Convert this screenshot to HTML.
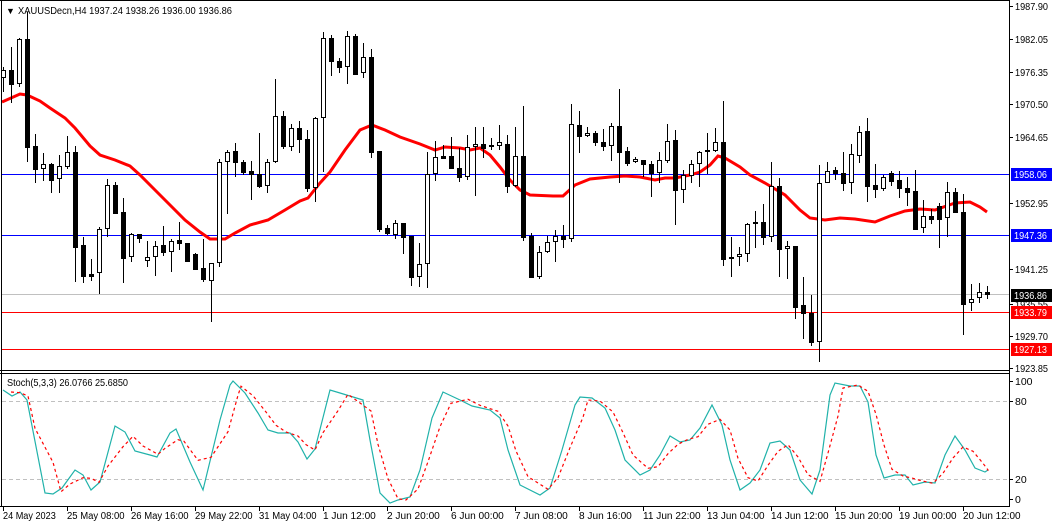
<!DOCTYPE html>
<html><head><meta charset="utf-8"><style>
html,body{margin:0;padding:0;background:#fff;width:1054px;height:527px;overflow:hidden}
svg{display:block;font-family:"Liberation Sans",sans-serif}
</style></head><body>
<svg id="s" width="1054" height="527" viewBox="0 0 1054 527" xmlns="http://www.w3.org/2000/svg" shape-rendering="crispEdges">
<rect width="1054" height="527" fill="#fff"/>
<g id="lv"></g>
<g id="c"></g>
<g id="st"></g>
<line x1="1.5" y1="0" x2="1.5" y2="507" stroke="#000"/>
<line x1="1009.5" y1="0" x2="1009.5" y2="507" stroke="#000"/>
<line x1="0" y1="0.5" x2="1010" y2="0.5" stroke="#000"/>
<line x1="0" y1="370.5" x2="1010" y2="370.5" stroke="#000"/>
<line x1="0" y1="373.5" x2="1010" y2="373.5" stroke="#000"/>
<line x1="0" y1="506.5" x2="1010" y2="506.5" stroke="#000"/>
<text x="6" y="14" font-size="9">&#9660;</text>
<text x="18" y="14" font-size="10.5" fill="#000" textLength="214" lengthAdjust="spacingAndGlyphs">XAUUSDecn,H4  1937.24 1938.26 1936.00 1936.86</text>
<text x="7" y="386" font-size="10.5" textLength="121" lengthAdjust="spacingAndGlyphs">Stoch(5,3,3) 26.0766 25.6850</text>
<g id="ax" font-size="10.5"></g>
</svg>
<script>
const NS="http://www.w3.org/2000/svg";
function el(p,t,a,txt){const e=document.createElementNS(NS,t);for(const k in a)e.setAttribute(k,a[k]);if(txt!=null)e.textContent=txt;p.appendChild(e);return e;}
const lv=document.getElementById('lv'),cg=document.getElementById('c'),sg=document.getElementById('st'),ax=document.getElementById('ax');
[[174,'#0000ff'],[235,'#0000ff'],[294,'#c0c0c0'],[312,'#ff0000'],[349,'#ff0000']].forEach(l=>el(lv,'line',{x1:2,x2:1009,y1:l[0]+.5,y2:l[0]+.5,stroke:l[1]}));
const C=[[3,67,92,70,78,1],[11,47,103,70,84,0],[19,38,87,39,84,1],[27,12,162,39,147,0],[35,134,183,146,169,0],[43,153,181,164,169,1],[51,163,193,164,180,0],[59,155,193,166,179,1],[67,136,169,152,167,1],[75,146,282,152,247,0],[83,237,283,245,276,0],[91,259,281,274,276,0],[99,227,294,229,273,1],[107,179,237,185,229,1],[115,182,214,185,213,0],[123,198,283,212,258,0],[131,233,262,234,257,1],[139,234,243,234,238,0],[147,241,267,257,261,1],[155,241,276,246,257,1],[163,226,256,245,252,0],[171,239,272,241,252,1],[179,222,250,240,243,0],[187,243,262,243,261,0],[195,253,270,254,269,0],[203,239,282,268,279,0],[211,263,322,263,281,1],[219,159,267,162,263,1],[227,150,214,152,162,1],[235,143,177,151,162,0],[243,160,175,162,172,0],
[251,161,200,171,174,0],[259,133,188,174,186,0],[267,159,193,162,186,1],[275,79,163,116,162,1],[283,111,149,116,146,0],[291,124,151,128,147,1],[299,121,153,128,139,0],[307,130,192,139,188,0],[315,117,202,118,188,1],[323,32,172,38,118,1],[331,35,76,38,61,0],[339,58,73,61,67,0],[347,31,84,36,67,1],[355,34,75,36,74,0],[363,43,78,57,73,1],[371,49,158,57,152,0],[379,151,232,151,229,0],[387,225,235,228,233,0],[395,220,239,223,235,1],[403,223,254,223,237,0],[411,236,286,236,277,0],[419,243,287,264,277,1],[427,152,288,174,264,1],[435,141,181,157,174,1],[443,145,159,156,158,0],[451,137,169,156,168,0],[459,148,182,168,177,0],[467,135,180,147,177,1],[475,127,196,144,147,1],[483,127,158,144,148,0],[491,138,150,145,147,1],[499,125,150,142,146,1],
[507,135,193,144,186,0],[515,127,187,156,186,1],[523,106,241,156,237,0],[531,233,277,236,277,0],[539,246,279,252,277,1],[547,236,253,242,252,1],[555,230,262,236,242,1],[563,225,248,236,239,0],[571,104,242,124,239,1],[579,111,153,125,136,0],[587,127,137,133,136,1],[595,131,146,133,142,0],[603,129,151,142,146,0],[611,123,161,126,146,1],[619,89,183,126,152,0],[627,147,166,151,163,0],[635,157,163,159,162,1],[643,160,177,160,164,0],[651,161,197,164,173,0],[659,152,183,160,173,1],[667,124,163,141,161,1],[675,130,225,140,190,0],[683,170,203,175,190,1],[691,160,183,164,176,1],[699,151,187,152,164,1],[707,133,174,150,152,1],[715,128,152,142,151,1],[723,101,266,142,259,0],[731,237,277,257,259,1],[739,247,266,254,257,1],[747,223,262,224,254,1],
[755,211,248,222,224,1],[763,204,245,222,237,0],[771,162,242,186,237,1],[779,178,277,186,249,0],[787,241,279,246,249,1],[795,246,319,246,307,0],[803,277,339,305,313,0],[811,295,346,313,342,0],[819,165,362,183,342,1],[827,162,183,171,183,1],[835,167,180,170,173,0],[843,152,191,173,183,0],[851,144,194,154,183,1],[859,126,163,132,156,1],[867,118,202,131,186,0],[875,164,198,185,189,0],[883,175,191,177,189,1],[891,171,186,173,181,0],[899,171,198,180,188,0],[907,177,206,188,192,0],[915,170,230,191,229,0],[923,200,233,216,228,1],[931,209,224,216,219,0],[939,203,248,206,219,0],[947,182,237,192,218,1],[955,188,213,192,212,0],[963,194,335,212,304,0],[971,284,311,299,303,1],[979,283,303,292,298,1],[987,286,299,292,294,0]];
const MA=[[2,102],[20,94],[27,95],[40,101],[50,108],[65,118],[75,128],[90,146],[100,155],[115,160],[130,166],[140,175],[155,190],[170,205],[185,220],[200,232],[210,239],[225,239],[235,233],[250,225],[268,220],[285,210],[300,201],[308,198],[320,183],[330,172],[345,150],[360,130],[372,125],[385,130],[400,137],[420,144],[435,150],[445,147],[460,148],[470,150],[480,148],[490,155],[500,167],[510,180],[520,190],[530,195],[553,196],[563,196],[575,185],[590,179],[610,177],[625,176],[640,177],[655,180],[665,178],[675,178],[690,175],[700,172],[710,165],[718,156],[725,158],[740,167],[750,175],[765,183],[785,195],[800,210],[810,218],[825,220],[840,218],[855,219],[875,222],[890,216],[905,211],[920,209],[935,210],[955,203],[970,202],[980,207],[987,212]];
el(cg,'polyline',{points:MA.map(p=>p.join(',')).join(' '),fill:'none',stroke:'#ff0000','stroke-width':3,'shape-rendering':'auto'});
C.forEach(c=>{const x=c[0]+.5;
el(cg,'line',{x1:x,x2:x,y1:c[1],y2:c[2],stroke:'#000'});
const h=Math.max(c[4]-c[3],1);
if(c[5]) el(cg,'rect',{x:c[0]-2+.5,y:c[3]+.5,width:4,height:Math.max(h-1,1),fill:'#fff',stroke:'#000'});
else el(cg,'rect',{x:c[0]-2,y:c[3],width:5,height:h+1,fill:'#000'});
});
[401,479].forEach(y=>el(sg,'line',{x1:2,x2:1009,y1:y+.5,y2:y+.5,stroke:'#c0c0c0','stroke-dasharray':'4,3'}));
const T=[[3,390],[12,396],[20,392],[27,400],[45,493],[53,494],[62,488],[75,470],[83,475],[91,490],[100,482],[115,426],[125,432],[135,451],[150,455],[157,457],[170,433],[176,429],[190,462],[203,490],[220,420],[230,385],[233,381],[245,393],[258,413],[268,430],[278,433],[290,433],[298,442],[307,459],[315,449],[330,390],[340,393],[363,400],[370,440],[380,493],[390,503],[398,500],[410,497],[420,470],[432,418],[443,392],[460,400],[472,406],[490,410],[500,418],[508,450],[520,485],[540,495],[550,488],[562,450],[575,405],[580,397],[592,398],[605,408],[615,430],[625,460],[640,475],[650,470],[660,455],[670,436],[680,442],[690,440],[700,428],[712,405],[722,425],[730,460],[740,490],[750,483],[760,470],[770,443],[780,441],[790,450],[800,480],[812,494],[820,470],[830,395],[835,383],[850,386],[860,386],[868,402],[876,455],[884,478],[895,475],[905,475],[913,485],[925,482],[935,483],[945,455],[955,436],[965,450],[975,468],[985,472],[988,470]];
el(sg,'polyline',{points:T.map(p=>p.join(',')).join(' '),fill:'none',stroke:'#20b2aa','stroke-width':1.2,'shape-rendering':'auto'});
const R=T.map((p,i)=>{const a=T[Math.max(i-1,0)][1],b=p[1],c=T[Math.min(i+1,T.length-1)][1];return [Math.min(p[0]+8,988),((a+b+c)/3).toFixed(1)];});
el(sg,'polyline',{points:R.map(p=>p.join(',')).join(' '),fill:'none',stroke:'#ff0000','stroke-width':1.2,'stroke-dasharray':'3,3','shape-rendering':'auto'});
[[1987.90,6],[1982.05,39],[1976.35,72],[1970.50,104],[1964.65,137],[1952.95,203],[1941.25,269],[1935.55,304],[1929.70,336],[1923.85,368]].forEach(a=>{
el(ax,'line',{x1:1009,x2:1013,y1:a[1]+.5,y2:a[1]+.5,stroke:'#000'});
el(ax,'text',{x:1015,y:a[1]+4,textLength:33,lengthAdjust:'spacingAndGlyphs'},a[0].toFixed(2));});
[[1958.06,174,'#0000ff','#fff'],[1947.36,235,'#0000ff','#fff'],[1936.86,295,'#000','#fff'],[1933.79,312,'#ff0000','#fff'],[1927.13,349,'#ff0000','#fff']].forEach(b=>{
el(ax,'rect',{x:1011,y:b[1]-6,width:41,height:13,fill:b[2]});
el(ax,'text',{x:1014,y:b[1]+4,fill:b[3],textLength:33,lengthAdjust:'spacingAndGlyphs'},b[0].toFixed(2));});
[['100',381],['80',401],['20',479],['0',499]].forEach(a=>{
el(ax,'line',{x1:1009,x2:1013,y1:a[1]+.5,y2:a[1]+.5,stroke:'#000'});
el(ax,'text',{x:1015,y:a[1]+4},a[0]);});
[['24 May 2023',3],['25 May 08:00',67],['26 May 16:00',131],['29 May 22:00',195],['31 May 04:00',259],['1 Jun 12:00',323],['2 Jun 20:00',387],['6 Jun 00:00',451],['7 Jun 08:00',515],['8 Jun 16:00',579],['11 Jun 22:00',643],['13 Jun 04:00',707],['14 Jun 12:00',771],['15 Jun 20:00',835],['19 Jun 00:00',899],['20 Jun 12:00',963]].forEach(t=>{
el(ax,'line',{x1:t[1]+.5,x2:t[1]+.5,y1:507,y2:511,stroke:'#000'});
el(ax,'text',{x:t[1],y:519,'font-size':10,textLength:(t[0].length*4.8).toFixed(1),lengthAdjust:'spacingAndGlyphs'},t[0]);});
</script>
</body></html>
